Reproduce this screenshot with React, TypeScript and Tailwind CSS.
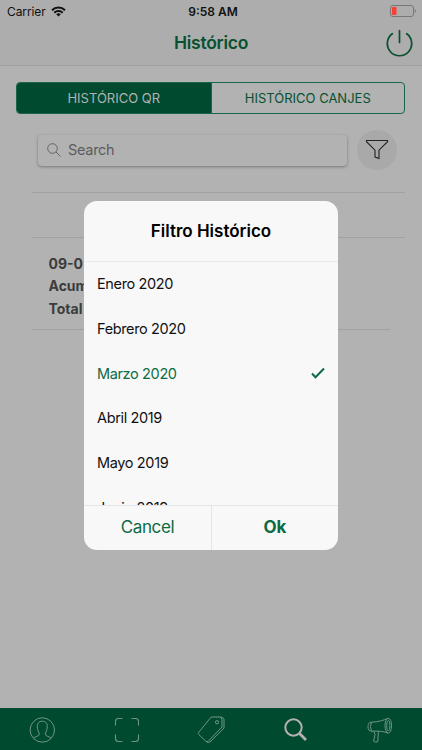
import { clsx } from "clsx";

const months = [
  "Enero 2020",
  "Febrero 2020",
  "Marzo 2020",
  "Abril 2019",
  "Mayo 2019",
  "Junio 2019",
];
const selected = "Marzo 2020";

const StatusBar = () => {
  return (
    <div className="grid h-[22px] grid-cols-[1fr_auto_1fr] items-center pl-[7px] pr-[5px] text-[12px] leading-[22px] text-[#111]">
      <div className="flex items-center gap-[5px]">
        <span className="tracking-[-0.1px]">Carrier</span>
        <svg width="15" height="11" viewBox="0 0 15 11" fill="none" stroke="#111" strokeWidth="2">
          <path d="M1 4.2a9.2 9.2 0 0 1 13 0M3.3 6.7a6 6 0 0 1 8.4 0" />
          <path d="M7.5 10.5 5.2 8.3a3.3 3.3 0 0 1 4.6 0z" fill="#111" stroke="none" />
        </svg>
      </div>
      <span className="pl-[2px] pt-px text-center font-semibold">9:58 AM</span>
      <svg className="justify-self-end" width="27" height="13" viewBox="0 0 27 13">
        <rect x="0.5" y="0.5" width="23" height="11" rx="2.5" fill="none" stroke="#777" />
        <rect x="2" y="2" width="4.5" height="8" rx="1" fill="#fb3f31" />
        <path d="M24.8 4v4c1.5-.7 1.5-3.3 0-4z" fill="#777" />
      </svg>
    </div>
  );
};

const Header = () => {
  return (
    <div className="grid h-[42px] grid-cols-[1fr_auto_1fr] items-center px-[9px]">
      <span />
      <h1 className="text-[17.5px] font-semibold leading-[42px] tracking-[-0.25px] text-[#07512f]">
        Histórico
      </h1>
      <svg className="justify-self-end" width="27" height="28" viewBox="0 0 27 28" fill="none" stroke="#07512f" strokeWidth="1.7" strokeLinecap="round">
        <path d="M13.5 1.5v12M6.3 4.7a12.2 12.2 0 1 0 14.4 0" />
      </svg>
    </div>
  );
};

const TabBar = () => {
  return (
    <nav className="flex h-[42px] items-center justify-between bg-[#004a30] px-[28px] text-[#6f9685]">
      <svg width="28" height="28" viewBox="0 0 28 28" fill="none" stroke="currentColor">
        <circle cx="14.3" cy="15" r="12.2" />
        <path d="M5.5 23c1-1.3 5.8-1.5 5.8-4 0-1.4-1.3-2.2-1.8-5.5-.7-4.5.8-7.3 4.8-7.3s5.5 2.8 4.800 7.3c-.5 3.3-1.8 4.1-1.8 5.5 0 2.5 4.8 2.7 5.8 4" />
      </svg>
      <svg width="28" height="28" viewBox="0 0 28 28" fill="none" stroke="currentColor" strokeWidth="1.1">
        <path d="M2.500 10.500v-4q0-3 3-3h4M18.500 3.500h4q3 0 3 3v4M25.500 19.500v4q0 3-3 3h-4M9.500 26.500h-4q-3 0-3-3v-4" />
      </svg>
      <svg width="28" height="28" viewBox="0 0 28 28" fill="none" stroke="currentColor">
        <path d="M14.2 2h8.6l2.2 2v8L11.3 26.2q-1.3 1.2-2.5 0L1.800 19.500q-1.1-1.100 0-2.300z" />
        <path d="m22.8 2 3 .5 1.200 1.600v9L13 27q-1.500 1.200-3.500-.3" />
        <circle cx="20" cy="7.200" r="1.600" />
      </svg>
      <svg width="28" height="28" viewBox="0 0 28 28" fill="none" stroke="#b2b2b2" strokeWidth="2">
        <circle cx="11.5" cy="12.5" r="8.2" />
        <path d="m17.5 18.5 6.500 6.500" strokeWidth="2.800" />
      </svg>
      <svg width="28" height="28" viewBox="0 0 28 28" fill="none" stroke="currentColor">
        <path d="M22 3.300C17 5.500 12 7 5.500 7.200q-3.500 0-3.500 4.500t3.500 4.500c6.500-.3 11.500 0 16.500 1.800" />
        <ellipse cx="22.300" cy="10.700" rx="3.300" ry="7.400" />
        <ellipse cx="22.300" cy="10.700" rx="1.600" ry="5.300" />
        <path d="M5.500 7.200Q3.500 11.500 5.500 16.200M7.800 16.200l1.200 3.300-1.400 6.700q2 1.500 4.200.5l.5-10" />
      </svg>
    </nav>
  );
};

const FilterDialog = () => {
  return (
    <div className="flex h-[349px] w-[254px] flex-col overflow-hidden rounded-[13px] bg-[#f8f8f8] text-[#111]">
      <h2 className="h-[61px] shrink-0 border-b border-[#e9e9e9] text-center text-[17px] font-semibold leading-[61px] text-black">
        Filtro Histórico
      </h2>
      <ul className="min-h-0 flex-1 overflow-hidden">
        {months.map((month) => (
          <li
            key={month}
            className={clsx(
              "flex h-[44.8px] items-center justify-between px-[13px] text-[14.5px] tracking-[-0.36px]",
              month === selected && "text-[#0c6b43]",
            )}
          >
            {month}
            {month === selected && (
              <svg width="14" height="12" viewBox="0 0 14 12" fill="none" stroke="currentColor" strokeWidth="2">
                <path d="m1 6.500 3.500 3.700L13 1.500" />
              </svg>
            )}
          </li>
        ))}
      </ul>
      <div className="grid h-[45px] shrink-0 grid-cols-[128px_1fr] border-t border-[#e6e6e6] text-[17px] text-[#0c6b43]">
        <button className="border-r border-[#e6e6e6] tracking-[-0.4px]">Cancel</button>
        <button className="font-bold">Ok</button>
      </div>
    </div>
  );
};

const App = () => {
  return (
    <div className="relative flex h-[750px] w-[422px] flex-col bg-[#b2b2b2] font-[Inter,sans-serif]">
      <header className="h-[66px] border-b border-[#a0a0a0] bg-[#adadad]">
        <StatusBar />
        <Header />
      </header>
      <main className="flex-1">
        <div className="ml-[16px] mr-[17px] mt-[16px] grid h-[32px] grid-cols-2 overflow-hidden rounded-[4px] border border-[#1b6548] text-center text-[13px] leading-[30px]">
          <span className="bg-[#004a30] text-[#b2b2b2]">HISTÓRICO QR</span>
          <span className="border-l border-[#1b6548] text-[#07512f]">HISTÓRICO CANJES</span>
        </div>
        <div className="mt-[16px] flex items-center gap-[10px] pl-[38px]">
          <div className="flex h-[31px] w-[309px] items-center gap-[7px] rounded-[4px] bg-[#b2b2b2] pb-px pl-[9px] text-[14.5px] tracking-[-0.3px] text-[#5c5c5c] shadow-[0_1px_3px_#777]">
            <svg className="mt-px" width="14" height="14" viewBox="0 0 14 14" fill="none" stroke="#666">
              <circle cx="5.500" cy="5.500" r="4.800" />
              <path d="m9 9 4.500 4.500" />
            </svg>
            Search
          </div>
          <div className="flex size-[40px] items-center justify-center rounded-full bg-[#a9a9a9]">
            <svg width="24" height="22" viewBox="0 0 24 22" fill="none" stroke="#222" strokeWidth="1.1">
              <path d="M1.500 1.500h21v1.200L14 11.200v8.300l-4-1.500v-6.800L1.500 2.700z" />
            </svg>
          </div>
        </div>
        <div className="ml-[32px] mr-[17px] mt-[22px] h-[46px] border-y border-[#a1a1a3]" />
        <div className="mx-[32px] h-[92px] border-b border-[#a1a1a3] pl-[16.5px] pt-[15px] text-[14px] font-bold leading-[22.300px] text-[#3c3c3c]">
          <div className="w-[36px] overflow-hidden">
            <p>09-0</p>
            <p>Acum</p>
            <p>Total</p>
          </div>
        </div>
      </main>
      <TabBar />
      <div className="absolute inset-0 flex items-center justify-center">
        <FilterDialog />
      </div>
    </div>
  );
};

export default App;
